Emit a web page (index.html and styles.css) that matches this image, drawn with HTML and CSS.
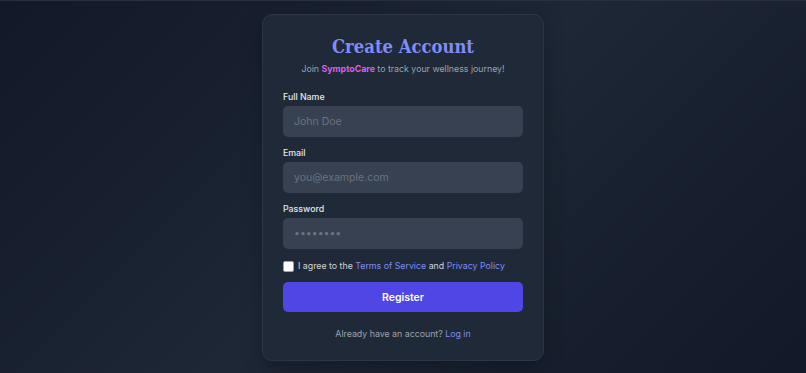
FILE: index.html
```html
<!DOCTYPE html>
<html lang="en">
<head>
<meta charset="utf-8">
<title>Create Account - SymptoCare</title>
<link rel="stylesheet" href="styles.css">
</head>
<body>
<main class="page">
  <form class="card">
    <h1 class="title">Create Account</h1>
    <p class="subtitle">Join <strong class="brand">SymptoCare</strong> to track your wellness journey!</p>

    <div class="field">
      <label class="label" for="name">Full Name</label>
      <input class="input" id="name" type="text" placeholder="John Doe">
    </div>
    <div class="field">
      <label class="label" for="email">Email</label>
      <input class="input" id="email" type="email" placeholder="you@example.com">
    </div>
    <div class="field">
      <label class="label" for="pw">Password</label>
      <input class="input" id="pw" type="password" placeholder="••••••••">
    </div>

    <label class="agree">
      <span class="box"></span>
      <span>I agree to the <a class="link" href="#">Terms of Service</a> and <a class="link" href="#">Privacy Policy</a></span>
    </label>

    <button class="btn" type="button">Register</button>

    <p class="footer">Already have an account? <a class="link" href="#">Log in</a></p>
  </form>
</main>
</body>
</html>
```

FILE: styles.css
```css
* { box-sizing: border-box; }
html, body { margin: 0; height: 100%; }
body {
  background: linear-gradient(135deg, #111827 0%, #1e2736 50%, #111827 100%);
  font-family: Inter, "Noto Sans", "Liberation Sans", sans-serif;
  border-top: 1px solid #2a303b;
}
.page {
  display: flex;
  justify-content: center;
  padding-top: 13px;
}
.card {
  width: 282px;
  background: #1f2937;
  border: 1px solid #2c3646;
  border-radius: 10px;
  padding: 20px 20px 19px;
  display: flex;
  flex-direction: column;
  box-shadow: 0 6px 20px rgba(0,0,0,0.25);
}
.card > * { flex: none; }
.title {
  margin: 0;
  text-align: center;
  font-family: "DejaVu Serif Condensed", "DejaVu Serif", "Liberation Serif", serif;
  font-stretch: condensed;
  font-weight: bold;
  font-size: 18.3px;
  letter-spacing: 0px;
  line-height: 24px;
  color: #818cf8;
}
.subtitle {
  margin: 3px 0 14px;
  text-align: center;
  font-size: 8.8px;
  line-height: 14px;
  color: #9ca3af;
}
.brand { color: #d95fe9; font-weight: 700; }
.field {
  display: flex;
  flex-direction: column;
  margin-bottom: 9px;
}
.label {
  font-size: 8.8px;
  line-height: 13px;
  font-weight: 500;
  color: #e5e7eb;
  margin-bottom: 3px;
}
.input {
  height: 31px;
  border: none;
  border-radius: 5px;
  background: #374151;
  padding: 0 11px;
  font-family: inherit;
  font-size: 10.5px;
  color: #e5e7eb;
  outline: none;
}
.input::placeholder { color: #6b7280; }
.agree {
  display: flex;
  align-items: center;
  gap: 4px;
  font-size: 8.8px;
  line-height: 14px;
  color: #d1d5db;
  margin-top: 1px;
}
.box {
  width: 11px;
  height: 11px;
  background: #fff;
  border: 1px solid #9ca3af;
  border-radius: 2px;
}
.link { color: #818cf8; text-decoration: none; }
.btn {
  margin-top: 9px;
  height: 30px;
  border: none;
  border-radius: 5px;
  background: #4f46e5;
  color: #fff;
  font-family: inherit;
  font-size: 10.5px;
  font-weight: 600;
}
.footer {
  margin: 15px 0 0;
  text-align: center;
  font-size: 8.8px;
  line-height: 14px;
  color: #9ca3af;
}
```
